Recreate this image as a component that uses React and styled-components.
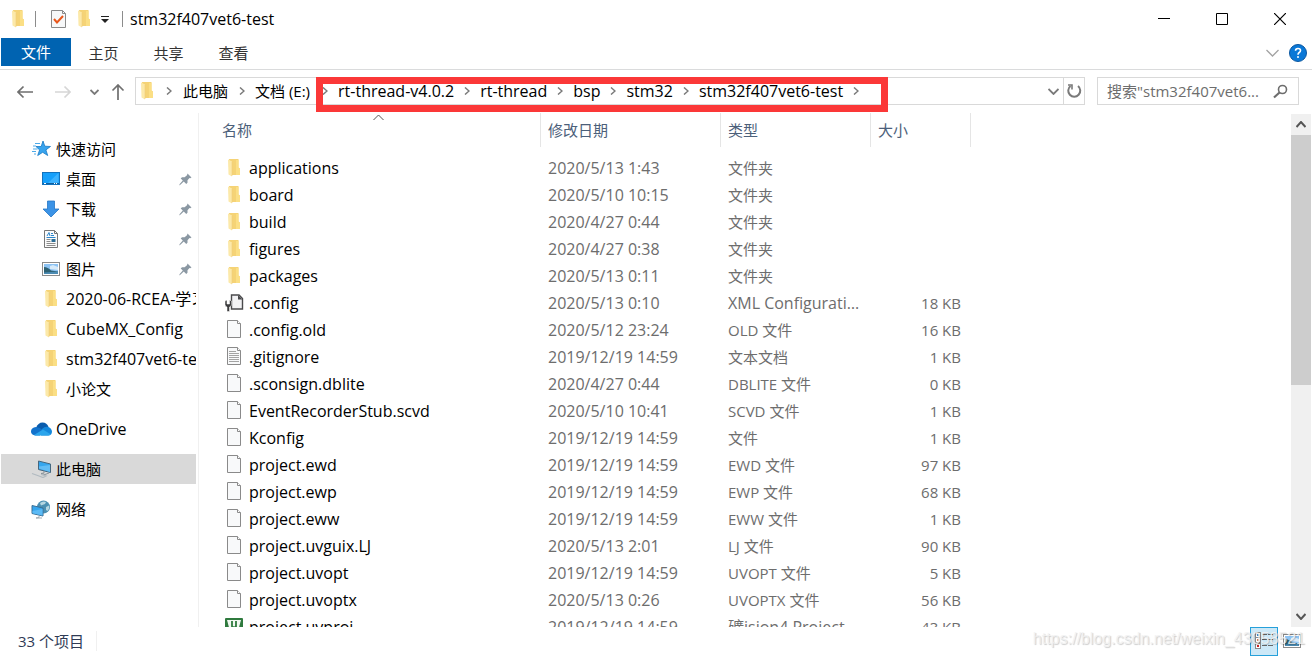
import React, { useState } from "react";
import styled, { createGlobalStyle } from "styled-components";

const GlobalStyle = createGlobalStyle`
  * {
    box-sizing: border-box;
  }

  body {
    margin: 0;
    overflow: hidden;
    background: #fff;
  }

  body, button, input {
    font-family: "Open Sans", "Noto Sans CJK SC", sans-serif;
    font-size: 15px;
    line-height: 20px;
    color: #000;
  }

  svg {
    display: block;
    flex: none;
  }
`;

const btnMixin = `
  display: flex;
  align-items: center;
  justify-content: center;
  padding: 0;
  border: 0;
  background: none;
`;

const Window = styled.div`
  position: relative;
  display: flex;
  flex-direction: column;
  height: 100vh;
`;

const TitleBar = styled.header`
  display: flex;
  align-items: center;
  height: 38px;
  padding: 0 3px 0 10px;
`;

const QuickButton = styled.button`
  ${btnMixin}
  width: ${({ $narrow }) => ($narrow ? 16 : 26)}px;
  height: 26px;
`;

const QuickTools = styled.div`
  display: flex;
  align-items: center;
`;

const Divider = styled.span`
  width: 1px;
  height: 16px;
  margin: 0 ${({ $right }) => $right}px 0 ${({ $left }) => $left}px;
  background: #8c8c8c;
`;

const Title = styled.h1`
  flex: 1;
  margin: 0;
  font-size: 16px;
  font-weight: 400;
`;

const WindowButton = styled.button`
  ${btnMixin}
  width: 58px;
  height: 38px;
`;

const Ribbon = styled.nav`
  display: flex;
  align-items: flex-start;
  height: 32px;
  padding: 0 5px 0 1px;
  border-bottom: 1px solid #dadbdc;
`;

const Tab = styled.button`
  ${btnMixin}
  width: ${({ $file }) => ($file ? 70 : 65)}px;
  height: 28px;
  padding-top: ${({ $file }) => ($file ? 0 : 2)}px;
  background: ${({ $file }) => ($file ? "#0063b1" : "transparent")};
  color: ${({ $file }) => ($file ? "#fff" : "#333")};
`;

const RibbonEnd = styled.div`
  display: flex;
  align-items: center;
  gap: 10px;
  height: 30px;
  margin-left: auto;
`;

const IconButton = styled.button`
  ${btnMixin}
`;

const NavRow = styled.div`
  display: flex;
  align-items: center;
  padding: 7px 13px 8px;
`;

const History = styled.div`
  display: flex;
  align-items: center;
`;

const HistoryButton = styled.button`
  ${btnMixin}
  width: ${({ $w }) => $w}px;
  height: 28px;
  padding-top: 2px;
`;

const AddressBar = styled.div`
  display: flex;
  flex: 1;
  height: 28px;
  border: 1px solid #d9d9d9;
`;

const Crumbs = styled.div`
  display: flex;
  flex: 1;
  align-items: center;
  padding-left: 5px;
`;

const CrumbGroup = styled.div`
  position: relative;
  display: flex;
  align-items: center;
  padding-left: 2px;
`;

const Highlight = styled.span`
  position: absolute;
  inset: -4px -19px -11px 6px;
  border: 7px solid #fb3838;
  pointer-events: none;
`;

const Crumb = styled.button`
  ${btnMixin}
  font-size: ${({ $latin }) => ($latin ? 16 : 15)}px;
  white-space: nowrap;
`;

const CrumbArrow = styled.span`
  display: flex;
  justify-content: center;
  width: ${({ $w = 26 }) => $w}px;
`;

const AddressButton = styled.button`
  ${btnMixin}
  width: 21px;
  border-left: 1px solid ${({ $line }) => ($line ? "#d9d9d9" : "transparent")};
`;

const SearchBox = styled.label`
  display: flex;
  align-items: center;
  width: 202px;
  height: 28px;
  margin-left: 12px;
  padding: 0 10px 0 9px;
  border: 1px solid #d9d9d9;
`;

const SearchInput = styled.input`
  flex: 1;
  min-width: 0;
  padding: 0;
  border: 0;
  outline: none;
  text-overflow: ellipsis;

  &::placeholder {
    color: #6d6d6d;
    opacity: 1;
  }
`;

const Body = styled.div`
  display: flex;
  flex: 1;
  min-height: 0;
`;

const Sidebar = styled.aside`
  display: flex;
  flex-direction: column;
  gap: 10px;
  width: 199px;
  padding: 21px 2px 0 1px;
  border-right: 1px solid #f0f0f0;
`;

const TreeItem = styled.a`
  display: flex;
  align-items: center;
  height: 30px;
  padding-left: ${({ $nested }) => ($nested ? 40 : 29)}px;
  background: ${({ $active }) => ($active ? "#d9d9d9" : "transparent")};
  color: #000;
  text-decoration: none;
`;

const TreeIcon = styled.span`
  display: flex;
  flex: none;
  justify-content: center;
  width: ${({ $nested }) => ($nested ? 20 : 22)}px;
  margin-right: ${({ $nested }) => ($nested ? 5 : 4)}px;
`;

const TreeLabel = styled.span`
  flex: 1;
  overflow: hidden;
  font-size: ${({ $latin }) => ($latin ? 16 : 15)}px;
  white-space: nowrap;
`;

const PinSlot = styled.span`
  padding-right: 4px;
`;

const FilePane = styled.main`
  flex: 1;
  min-width: 0;
  overflow: hidden;
`;

const FileTable = styled.table`
  width: 772px;
  table-layout: fixed;
  border-collapse: collapse;
`;

const Col = styled.col`
  width: ${({ $w }) => $w}px;
`;

const Th = styled.th`
  padding: 0 0 7px;
  font-weight: 400;
  text-align: left;
`;

const HeadCell = styled.div`
  position: relative;
  display: flex;
  align-items: center;
  height: 34px;
  padding-left: ${({ $first }) => ($first ? 23 : 7)}px;
  border-right: 1px solid #e5e5e5;
  color: #4c607a;
`;

const SortMark = styled.span`
  position: absolute;
  top: 1px;
  left: 51%;
`;

const Td = styled.td`
  height: 27px;
  padding: 0 10px 0 7px;
  overflow: hidden;
  color: #6d6d6d;
  font-size: ${({ $latin }) => ($latin ? 16 : 15)}px;
  text-align: ${({ $right }) => ($right ? "right" : "left")};
  text-overflow: ellipsis;
  white-space: nowrap;
`;

const NameTd = styled(Td)`
  padding-left: 26px;
`;

const FileName = styled.span`
  display: flex;
  align-items: center;
  color: #000;
`;

const FileIcon = styled.span`
  display: flex;
  align-items: center;
  justify-content: ${({ $wide }) => ($wide ? "flex-start" : "center")};
  width: 18px;
  height: 20px;
  margin-right: 6px;
`;

const ScrollBar = styled.div`
  display: flex;
  flex-direction: column;
  width: 20px;
  margin: 1px 1px 0 0;
  background: #f0f0f0;
`;

const ScrollButton = styled.button`
  ${btnMixin}
  height: 21px;
`;

const ScrollTrack = styled.div`
  flex: 1;
`;

const ScrollThumb = styled.div`
  height: 53%;
  background: #cdcdcd;
`;

const StatusBar = styled.footer`
  display: flex;
  align-items: center;
  justify-content: space-between;
  height: 30px;
  padding: 0 6px 2px 18px;
  color: #2f3b56;
`;

const Count = styled.span`
  padding-right: 12px;
  border-right: 1px solid #f0f0f0;
`;

const Views = styled.div`
  display: flex;
`;

const ViewButton = styled.button`
  ${btnMixin}
  width: 28px;
  height: 29px;
  border: 1px solid ${({ $active }) => ($active ? "#26a0da" : "transparent")};
  background: ${({ $active }) => ($active ? "#cce8f7" : "transparent")};
`;

const Watermark = styled.span`
  position: absolute;
  right: 7px;
  bottom: 8px;
  color: rgba(242, 242, 242, 0.85);
  font-family: "Liberation Sans", sans-serif;
  font-size: 16px;
  line-height: 20px;
  text-shadow: 1px 1px 1px rgba(0, 0, 0, 0.2);
  pointer-events: none;
`;

const FolderIcon = () => (
  <svg width="13" height="18" viewBox="0 0 13 18">
    <path d="M1 0h9.500v8.500l1.500 1v6.500H3z" fill="#f5d376" />
    <path d="M8 1h2.500v8l1.500 1v6H8z" fill="#fbdf85" />
    <path d="M0 .5l4 2V17.500L.5 15.500z" fill="#fce9a9" />
    <path d="M4 3v14" stroke="#efcf7c" strokeWidth=".6" />
  </svg>
);

const PageIcon = ({ lines }) => (
  <svg width="16" height="19" viewBox="0 0 16 19">
    <path d="M1.500.5h10l3 3v14h-13z" fill="#f8f9fa" stroke="#8a8a8a" />
    <path d="M11.500.5v3h3" fill="#fff" stroke="#8a8a8a" />
    {lines && (
      <path d="M3 4.500h7M3 6.500h10M3 8.500h10M3 10.500h10M3 12.500h10M3 14.500h10" stroke="#a3a3a3" />
    )}
  </svg>
);

const ConfigIcon = () => (
  <svg width="19" height="18" viewBox="0 0 19 18">
    <path d="M6.500 1h7.500l3.500 3.500V15h-11z" fill="#f2f2f4" stroke="#4a4a4c" strokeWidth="1.400" />
    <path d="M13 1v4.500h4.500z" fill="#4a4a4c" />
    <path d="M0 7v3.500q0 2 2 2.500v4.500h2.500V13q2-.5 2-2.500V7L4.500 6v4h-2.500V6z" fill="#3c3c3e" stroke="#fff" strokeWidth=".5" />
  </svg>
);

const UvisionIcon = () => (
  <svg width="18" height="18" viewBox="0 0 18 18">
    <rect width="18" height="18" rx="1" fill="#2f7a3e" />
    <path d="M2 2h14l-3.500 13h-7z" fill="#f2f8f2" />
    <path d="M7 3v8M7 8.500q3.500 2 4-1V3v6" fill="none" stroke="#2f7a3e" strokeWidth="1.800" />
  </svg>
);

const CheckPageIcon = () => (
  <svg width="15" height="18" viewBox="0 0 15 18">
    <path d="M.5.5h11l3 3v14H.5z" fill="#f7f8f9" stroke="#8a8a8a" />
    <path d="M11.500.5v3h3" fill="none" stroke="#8a8a8a" />
    <path d="M3 9l3 3.500L12 6" fill="none" stroke="#e8571c" strokeWidth="2" />
  </svg>
);

const Chevron = ({ dir = "right", w = 6, h = 8, color = "#7a7a7a", stroke = 1.5 }) => {
  const paths = {
    right: `M1 .5L${w - 1} ${h / 2}L1 ${h - 0.5}`,
    down: `M.5 1L${w / 2} ${h - 1}L${w - 0.5} 1`,
    up: `M.5 ${h - 1}L${w / 2} 1L${w - 0.5} ${h - 1}`,
  };
  return (
    <svg width={w} height={h} viewBox={`0 0 ${w} ${h}`}>
      <path d={paths[dir]} fill="none" stroke={color} strokeWidth={stroke} />
    </svg>
  );
};

const ArrowIcon = ({ dir, color = "#6f6f6f" }) => {
  const turn = { left: 0, up: 90, right: 180 }[dir];
  return (
    <svg width="16" height="16" viewBox="0 0 16 16">
      <g transform={`rotate(${turn} 8 8)`} fill="none" stroke={color} strokeWidth="1.700">
        <path d="M1 8h15M6.500 2.500L1 8l5.500 5.500" />
      </g>
    </svg>
  );
};

const StarIcon = () => (
  <svg width="19" height="18" viewBox="0 0 19 18">
    <path d="M11 1l1.800 5.200 5.700.3-4.600 3.400 1.800 5.600-5-3.200-5 3.200 1.900-5.600L4 6.500h5.200z" fill="#38a4ee" stroke="#1779c4" strokeWidth=".8" />
    <path d="M3 3.500h5M1 6h3M1 9h4.500M0 11.500h4M2 14h2" stroke="#4ca9e8" />
  </svg>
);

const DesktopIcon = () => (
  <svg width="18" height="14" viewBox="0 0 18 14">
    <rect x=".5" y=".5" width="17" height="12" fill="#16a0fb" stroke="#1272bd" />
    <path d="M6 11L16.500 1v10z" fill="#3db3ff" />
    <path d="M1 11.500h16" stroke="#0d5f9f" />
    <path d="M2 11.500h2M12 11.500h1M14 11.500h1" stroke="#fff" />
  </svg>
);

const DownloadIcon = () => (
  <svg width="18" height="18" viewBox="0 0 18 18">
    <path d="M5.500 1h7v8H17L9 17 1 9h4.500z" fill="#3b93e6" stroke="#2476c4" strokeWidth=".8" />
  </svg>
);

const DocumentIcon = () => (
  <svg width="18" height="18" viewBox="0 0 18 18">
    <path d="M2.500.5h10l3 3v14h-13z" fill="#fbfbfb" stroke="#777" />
    <path d="M12.500.5v3h3" fill="none" stroke="#777" />
    <path d="M5 6l2-3.500L8 6M9 3.500h2M9 5.500h3M4.500 7.500h9" fill="none" stroke="#2c86cc" />
    <path d="M4.500 9.500h4M4.500 11.500h4M4.500 13.500h9M4.500 15.500h9" stroke="#8c8c8c" />
    <rect x="9.500" y="9" width="4" height="3" fill="#2d6e96" />
  </svg>
);

const PictureIcon = () => (
  <svg width="18" height="14" viewBox="0 0 18 14">
    <rect x=".5" y=".5" width="17" height="13" fill="#fff" stroke="#8b8b8b" />
    <rect x="2" y="2" width="14" height="10" fill="#8dc3f3" />
    <path d="M8 4l3-1 5 2v3L8 7z" fill="#d7eaf9" />
    <path d="M2 5q4 0 7 3.500l7 1V12H2z" fill="#2e6173" />
    <path d="M2 10.500l14-1V12H2z" fill="#4b8bb3" />
  </svg>
);

const CloudIcon = () => (
  <svg width="21" height="14" viewBox="0 0 21 14">
    <path d="M5 6Q7 .5 11.500.5q4.500 0 6 4.500L13 9z" fill="#0a5cad" />
    <path d="M4.500 13.500Q0 13 0 9.500 0 5.500 5 5q4 .5 7 3l-3 5.500z" fill="#1272cc" />
    <path d="M11 7q3-3 6.500-2 3 1 3.500 4.500 0 3.500-3.500 4H10z" fill="#1488dc" />
    <path d="M3 13l9-5.500 8 5q-1 1-3 1H5q-1 0-2-.5z" fill="#2ba5ec" />
  </svg>
);

const ComputerIcon = () => (
  <svg width="21" height="18" viewBox="0 0 21 18">
    <path d="M7.500 1l12 3v8.500l-12-3z" fill="#36a6ee" stroke="#45677f" />
    <path d="M8 8.500V6.500L19 5v7z" fill="#63bdf5" />
    <path d="M13 11v2l-3 .5 4 1 4-1.500" fill="none" stroke="#8a949b" />
    <path d="M1 13.500l7 2.500 4 1.500 3-1.500-5-1.500" fill="none" stroke="#b1bac0" strokeWidth="1.300" />
  </svg>
);

const NetworkIcon = () => (
  <svg width="20" height="19" viewBox="0 0 20 19">
    <circle cx="12.500" cy="7" r="6.500" fill="#4a8fb2" />
    <path d="M9 3q3-2.500 6-1l-1 2-4 1.500zM15 7l3-1.500q1 3-1.500 5.500l-1.500-1z" fill="#b4d6e2" />
    <path d="M1 5.500l11 2.500v8L1 13.500z" fill="#36a6ee" stroke="#3c6f94" />
    <path d="M1.500 11L11.500 9v6.500l-10-2.300z" fill="#5cbaf5" />
    <path d="M8 16v1.500l-3 .5h6" fill="none" stroke="#a4adb3" />
  </svg>
);

const PinIcon = () => (
  <svg width="13" height="13" viewBox="0 0 13 13">
    <path d="M8.500.5l4 4-1.300.7-.7-.2-2 2.200v2.600l-1.300 1.200-2.400-2.400L.5 12.500v-1.300l3.300-3.600L1.700 5.400 3 4.300h2.600L8 2.200z" fill="#8b98a3" />
  </svg>
);

const SearchIcon = () => (
  <svg width="15" height="15" viewBox="0 0 15 15" fill="none" stroke="#6d6d6d">
    <circle cx="9.500" cy="5.500" r="4" strokeWidth="1.600" />
    <path d="M6.500 8.500L1 13.500" strokeWidth="2.200" />
  </svg>
);

const RefreshIcon = () => (
  <svg width="16" height="16" viewBox="0 0 16 16" fill="none" stroke="#7a7a7a" strokeWidth="2">
    <path d="M12 3a6 6 0 1 1-7.500 0" />
    <path d="M2 2h4v4.500" strokeWidth="1.600" />
  </svg>
);

const HelpIcon = () => (
  <svg width="18" height="18" viewBox="0 0 18 18">
    <circle cx="9" cy="9" r="8.500" fill="#0a78d7" stroke="#0b57a0" />
    <path d="M6.500 6.800Q6.500 4.500 9 4.500t2.500 2q0 1.200-1.300 2Q9 9.300 9 10.700" fill="none" stroke="#fff" strokeWidth="1.600" />
    <circle cx="9" cy="13" r="1" fill="#fff" />
  </svg>
);

const DetailsViewIcon = () => (
  <svg width="18" height="18" viewBox="0 0 18 18">
    {[1, 6, 12].map((y) => (
      <g key={y}>
        <rect x=".5" y={y - 0.5} width="5" height="5" fill="#fff" stroke="#8a8a8a" />
        <path d={`M7 ${y + 1.5}h5M13 ${y + 1.5}h5`} stroke="#666" />
      </g>
    ))}
    <path d="M2 3h2" stroke="#3a78b8" strokeWidth="2" />
    <path d="M2 8h2" stroke="#d07830" strokeWidth="2" />
    <path d="M2 14h2" stroke="#c22" strokeWidth="2" />
  </svg>
);

const treeGroups = [
  [
    { label: "快速访问", Icon: StarIcon },
    { label: "桌面", Icon: DesktopIcon, nested: true, pinned: true },
    { label: "下载", Icon: DownloadIcon, nested: true, pinned: true },
    { label: "文档", Icon: DocumentIcon, nested: true, pinned: true },
    { label: "图片", Icon: PictureIcon, nested: true, pinned: true },
    { label: "2020-06-RCEA-学习", Icon: FolderIcon, nested: true },
    { label: "CubeMX_Config", Icon: FolderIcon, nested: true },
    { label: "stm32f407vet6-test", Icon: FolderIcon, nested: true },
    { label: "小论文", Icon: FolderIcon, nested: true },
  ],
  [{ label: "OneDrive", Icon: CloudIcon }],
  [{ label: "此电脑", Icon: ComputerIcon }],
  [{ label: "网络", Icon: NetworkIcon }],
];

const files = [
  ["applications", "2020/5/13 1:43", "文件夹", "", "folder"],
  ["board", "2020/5/10 10:15", "文件夹", "", "folder"],
  ["build", "2020/4/27 0:44", "文件夹", "", "folder"],
  ["figures", "2020/4/27 0:38", "文件夹", "", "folder"],
  ["packages", "2020/5/13 0:11", "文件夹", "", "folder"],
  [".config", "2020/5/13 0:10", "XML Configuration File", "18 KB", "config"],
  [".config.old", "2020/5/12 23:24", "OLD 文件", "16 KB", "page"],
  [".gitignore", "2019/12/19 14:59", "文本文档", "1 KB", "text"],
  [".sconsign.dblite", "2020/4/27 0:44", "DBLITE 文件", "0 KB", "page"],
  ["EventRecorderStub.scvd", "2020/5/10 10:41", "SCVD 文件", "1 KB", "page"],
  ["Kconfig", "2019/12/19 14:59", "文件", "1 KB", "page"],
  ["project.ewd", "2019/12/19 14:59", "EWD 文件", "97 KB", "page"],
  ["project.ewp", "2019/12/19 14:59", "EWP 文件", "68 KB", "page"],
  ["project.eww", "2019/12/19 14:59", "EWW 文件", "1 KB", "page"],
  ["project.uvguix.LJ", "2020/5/13 2:01", "LJ 文件", "90 KB", "page"],
  ["project.uvopt", "2019/12/19 14:59", "UVOPT 文件", "5 KB", "page"],
  ["project.uvoptx", "2020/5/13 0:26", "UVOPTX 文件", "56 KB", "page"],
  ["project.uvproj", "2019/12/19 14:59", "礦ision4 Project", "43 KB", "uvision"],
];

const path = ["rt-thread-v4.0.2", "rt-thread", "bsp", "stm32", "stm32f407vet6-test"];

// Open Sans runs small next to the CJK glyphs, so latin text gets one size up
const startsLatin = (text) => /^[\w.-]{3}/.test(text);

const renderFileIcon = (kind) => {
  switch (kind) {
    case "folder":
      return <FolderIcon />;
    case "config":
      return <ConfigIcon />;
    case "uvision":
      return <UvisionIcon />;
    default:
      return <PageIcon lines={kind === "text"} />;
  }
};

const Arrow = ({ w }) => (
  <CrumbArrow $w={w}>
    <Chevron />
  </CrumbArrow>
);

const App = () => {
  const [selected, setSelected] = useState("此电脑");
  const [view, setView] = useState("details");

  const handleSelect = (e, label) => {
    e.preventDefault();
    setSelected(label);
  };

  return (
    <>
      <GlobalStyle />
      <Window>
        <TitleBar>
          <QuickTools>
            <QuickButton $narrow aria-label="窗口菜单"><FolderIcon /></QuickButton>
            <Divider $left={9} $right={9} />
            <QuickButton aria-label="属性"><CheckPageIcon /></QuickButton>
            <QuickButton aria-label="新建文件夹"><FolderIcon /></QuickButton>
            <QuickButton $narrow aria-label="自定义快速访问工具栏">
              <svg width="8" height="8" viewBox="0 0 8 8">
                <path d="M0 1.500h8" stroke="#222" />
                <path d="M0 4h8L4 8z" fill="#222" />
              </svg>
            </QuickButton>
            <Divider $left={9} $right={7} />
          </QuickTools>
          <Title>stm32f407vet6-test</Title>
          <WindowButton aria-label="最小化">
            <svg width="12" height="12" viewBox="0 0 12 12"><path d="M0 5.500h12" stroke="#000" /></svg>
          </WindowButton>
          <WindowButton aria-label="最大化">
            <svg width="12" height="12" viewBox="0 0 12 12"><path d="M.5.5h11v11H.5z" fill="none" stroke="#000" /></svg>
          </WindowButton>
          <WindowButton aria-label="关闭">
            <svg width="12" height="12" viewBox="0 0 12 12"><path d="M0 0l12 12M12 0L0 12" stroke="#000" strokeWidth="1.200" /></svg>
          </WindowButton>
        </TitleBar>

        <Ribbon>
          <Tab $file>文件</Tab>
          <Tab>主页</Tab>
          <Tab>共享</Tab>
          <Tab>查看</Tab>
          <RibbonEnd>
            <IconButton aria-label="展开功能区">
              <Chevron dir="down" w={13} h={8} color="#a3a3a3" stroke={1.3} />
            </IconButton>
            <IconButton aria-label="帮助"><HelpIcon /></IconButton>
          </RibbonEnd>
        </Ribbon>

        <NavRow>
          <History>
            <HistoryButton $w={24} aria-label="后退"><ArrowIcon dir="left" /></HistoryButton>
            <HistoryButton $w={51} aria-label="前进"><ArrowIcon dir="right" color="#d6d6d6" /></HistoryButton>
            <HistoryButton $w={12} aria-label="最近位置"><Chevron dir="down" w={9} h={6} stroke={1.8} /></HistoryButton>
            <HistoryButton $w={35} aria-label="上移"><ArrowIcon dir="up" /></HistoryButton>
          </History>
          <AddressBar>
            <Crumbs>
              <FolderIcon />
              <Arrow w={29} />
              <Crumb>此电脑</Crumb>
              <Arrow w={27} />
              <Crumb>文档 (E:)</Crumb>
              <CrumbGroup>
                {path.map((name) => (
                  <React.Fragment key={name}>
                    <Arrow />
                    <Crumb $latin>{name}</Crumb>
                  </React.Fragment>
                ))}
                <Arrow />
                <Highlight />
              </CrumbGroup>
            </Crumbs>
            <AddressButton aria-label="以前的位置"><Chevron dir="down" w={11} h={7} stroke={1.8} /></AddressButton>
            <AddressButton $line aria-label="刷新"><RefreshIcon /></AddressButton>
          </AddressBar>
          <SearchBox>
            <SearchInput aria-label="搜索" placeholder={'搜索"stm32f407vet6...'} />
            <SearchIcon />
          </SearchBox>
        </NavRow>

        <Body>
          <Sidebar>
            {treeGroups.map((group) => (
              <div key={group[0].label}>
                {group.map(({ label, Icon, nested, pinned }) => (
                  <TreeItem
                    key={label}
                    href="#"
                    $nested={nested}
                    $active={selected === label}
                    onClick={(e) => handleSelect(e, label)}
                  >
                    <TreeIcon $nested={nested}><Icon /></TreeIcon>
                    <TreeLabel $latin={startsLatin(label)}>{label}</TreeLabel>
                    {pinned && <PinSlot><PinIcon /></PinSlot>}
                  </TreeItem>
                ))}
              </div>
            ))}
          </Sidebar>

          <FilePane>
            <FileTable>
              <colgroup>
                <Col $w={342} />
                <Col $w={180} />
                <Col $w={150} />
                <Col $w={100} />
              </colgroup>
              <thead>
                <tr>
                  <Th>
                    <HeadCell $first>
                      名称
                      <SortMark><Chevron dir="up" w={11} h={7} color="#555" stroke={1} /></SortMark>
                    </HeadCell>
                  </Th>
                  <Th><HeadCell>修改日期</HeadCell></Th>
                  <Th><HeadCell>类型</HeadCell></Th>
                  <Th><HeadCell>大小</HeadCell></Th>
                </tr>
              </thead>
              <tbody>
                {files.map(([name, date, type, size, kind]) => (
                  <tr key={name}>
                    <NameTd $latin>
                      <FileName>
                        <FileIcon $wide={kind === "config"}>{renderFileIcon(kind)}</FileIcon>
                        {name}
                      </FileName>
                    </NameTd>
                    <Td $latin>{date}</Td>
                    <Td $latin={kind === "config" || kind === "uvision"}>{type}</Td>
                    <Td $right>{size}</Td>
                  </tr>
                ))}
              </tbody>
            </FileTable>
          </FilePane>

          <ScrollBar>
            <ScrollButton aria-label="向上滚动"><Chevron dir="up" w={10} h={7} color="#555" stroke={2} /></ScrollButton>
            <ScrollTrack><ScrollThumb /></ScrollTrack>
            <ScrollButton aria-label="向下滚动"><Chevron dir="down" w={10} h={7} color="#555" stroke={2} /></ScrollButton>
          </ScrollBar>
        </Body>

        <StatusBar>
          <Count>33 个项目</Count>
          <Views>
            <ViewButton $active={view === "details"} onClick={() => setView("details")} aria-label="详细信息">
              <DetailsViewIcon />
            </ViewButton>
            <ViewButton $active={view === "large"} onClick={() => setView("large")} aria-label="大缩略图">
              <PictureIcon />
            </ViewButton>
          </Views>
        </StatusBar>
        <Watermark>https://blog.csdn.net/weixin_43058521</Watermark>
      </Window>
    </>
  );
};

export default App;
